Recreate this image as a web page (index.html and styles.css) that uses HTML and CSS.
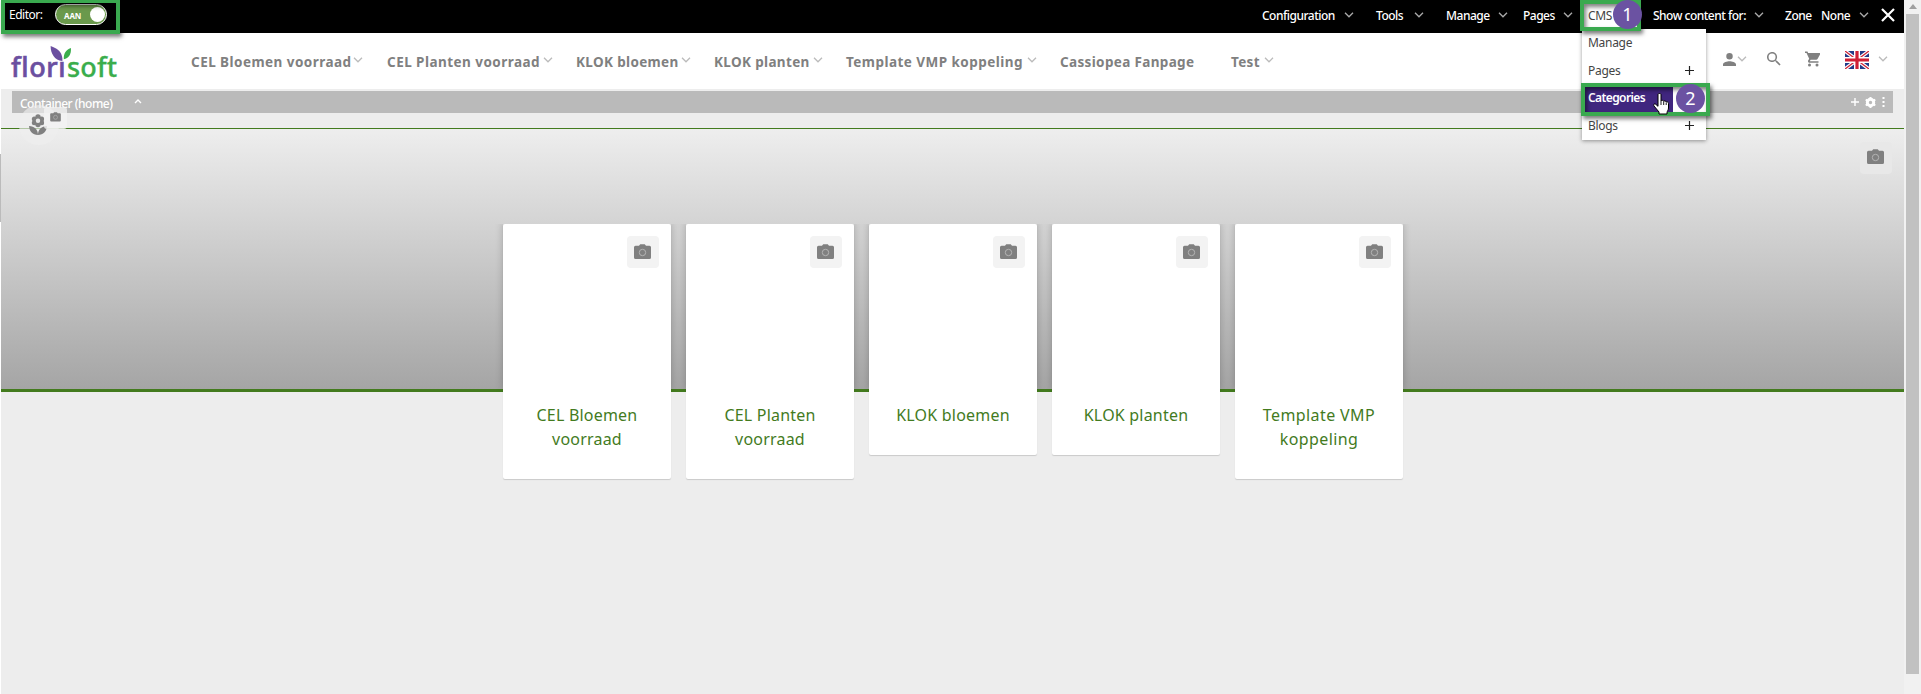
FILE: index.html
```html
<!DOCTYPE html>
<html lang="en">
<head>
<meta charset="utf-8">
<title>Florisoft</title>
<link rel="stylesheet" href="styles.css">
</head>
<body>
<svg class="defs" width="0" height="0">
  <symbol id="chev" viewBox="0 0 10 6"><path d="M1 .8 5 4.8 9 .8" fill="none" stroke="currentColor" stroke-width="1.3"/></symbol>
  <symbol id="cam" viewBox="0 0 17 16"><path d="M5 1.800 6.200.3h4.600L12 1.800h3.500a1.500 1.500 0 0 1 1.500 1.500V13.500a1.500 1.500 0 0 1-1.500 1.500h-14A1.500 1.500 0 0 1 0 13.500V3.300a1.500 1.500 0 0 1 1.500-1.500z" fill="#808080"/><circle cx="8.500" cy="8.500" r="3.200" fill="none" stroke="#b4b4b4" stroke-width="1"/></symbol>
</svg>
<div class="page">
  <header class="admin">
    <div class="editor"><span class="editor-label">Editor:</span><span class="toggle"><span>AAN</span><i></i></span></div>
    <nav class="admin-nav">
      <span class="a a-conf">Configuration</span><svg class="chev"><use href="#chev"/></svg>
      <span class="a a-tools">Tools</span><svg class="chev"><use href="#chev"/></svg>
      <span class="a a-manage">Manage</span><svg class="chev"><use href="#chev"/></svg>
      <span class="a a-pages">Pages</span><svg class="chev"><use href="#chev"/></svg>
      <span class="a a-show">Show content for:</span><svg class="chev"><use href="#chev"/></svg>
      <span class="a a-zone">Zone</span>
      <span class="a a-none">None</span><svg class="chev"><use href="#chev"/></svg>
      <svg class="close" viewBox="0 0 14 14"><path d="M1 1 13 13M13 1 1 13" stroke="#fff" stroke-width="2.200"/></svg>
    </nav>
  </header>
  <div class="site">
    <div class="logo">
      <svg class="leaves" viewBox="0 0 24 18"><path d="M1 0C10 3 14 8 13.500 16 5 15 1 8 1 0z" fill="#6b4fa0"/><path d="M22.500 2C23 9 20 13 15 14 14.500 8 17 4 22.500 2z" fill="#3aad4c"/></svg>
      <span class="flori">florı</span><span class="soft">soft</span>
    </div>
    <nav class="main-nav">
      <span class="m m1">CEL Bloemen voorraad</span><svg class="chev"><use href="#chev"/></svg>
      <span class="m m2">CEL Planten voorraad</span><svg class="chev"><use href="#chev"/></svg>
      <span class="m m3">KLOK bloemen</span><svg class="chev"><use href="#chev"/></svg>
      <span class="m m4">KLOK planten</span><svg class="chev"><use href="#chev"/></svg>
      <span class="m m5">Template VMP koppeling</span><svg class="chev"><use href="#chev"/></svg>
      <span class="m m6">Cassiopea Fanpage</span>
      <span class="m m7">Test</span><svg class="chev"><use href="#chev"/></svg>
    </nav>
    <div class="tools">
      <svg class="user" viewBox="4 4 16 16"><path d="M12 12a4 4 0 1 0 0-8 4 4 0 0 0 0 8zm0 2c-2.700 0-8 1.300-8 4v2h16v-2c0-2.700-5.300-4-8-4z" fill="#808080"/></svg>
      <svg class="chev"><use href="#chev"/></svg>
      <svg class="search" viewBox="3 3 18 18"><path d="M15.500 14h-.8l-.3-.3A6.500 6.500 0 1 0 13.700 14.400l.3.300v.8l5 5 1.500-1.500zM9.500 14a4.500 4.500 0 1 1 0-9 4.500 4.500 0 0 1 0 9z" fill="#808080"/></svg>
      <svg class="cart" viewBox="1 2 20 20"><path d="M7 18a2 2 0 1 0 0 4 2 2 0 0 0 0-4zM1 2v2h2l3.600 7.600-1.400 2.400C4.500 15.400 5.500 17 7 17h12v-2H7.400l1.100-2H16c.7 0 1.400-.4 1.700-1L21.300 5.500C21.600 4.800 21.200 4 20.400 4H5.200L4.300 2zM17 18a2 2 0 1 0 0 4 2 2 0 0 0 0-4z" fill="#808080"/></svg>
      <svg class="flag" viewBox="0 0 24 18"><path d="M0 0h24v18H0z" fill="#223a87"/><path d="M0 0 24 18M24 0 0 18" stroke="#fff" stroke-width="3.600"/><path d="M0 0 24 18M24 0 0 18" stroke="#cf2336" stroke-width="1.300"/><path d="M12 0v18M0 9h24" stroke="#fff" stroke-width="6"/><path d="M12 0v18M0 9h24" stroke="#cf1f35" stroke-width="3.200"/></svg>
      <svg class="chev"><use href="#chev"/></svg>
    </div>
  </div>
  <div class="container-bar">
    <span class="cname">Container (home)</span>
    <svg class="up" viewBox="0 0 8 5"><path d="M1 4 4 1 7 4" fill="none" stroke="#fff" stroke-width="1.400"/></svg>
    <div class="bar-tools">
      <svg width="8" height="8" viewBox="0 0 8 8"><path d="M4 0v8M0 4h8" stroke="#fff" stroke-width="1.400"/></svg>
      <svg width="11" height="11" viewBox="0 0 11 11"><circle cx="5.500" cy="5.500" r="3.200" fill="none" stroke="#fff" stroke-width="3"/><path d="M5.500 0v2.500M5.500 8.500V11M.7 2.700 3 4M8 7l2.300 1.300M.7 8.300 3 7M8 4l2.300-1.300" stroke="#fff" stroke-width="2"/></svg>
      <svg width="3" height="10" viewBox="0 0 3 10"><path d="M.5 0h2v2h-2zM.5 4h2v2h-2zM.5 8h2v2h-2z" fill="#fff"/></svg>
    </div>
  </div>
  <section class="hero">
    <div class="cam hero-cam"><svg><use href="#cam"/></svg></div>
    <div class="cards">
      <article class="card"><div class="pic"><div class="cam"><svg><use href="#cam"/></svg></div></div><h3>CEL Bloemen<br>voorraad</h3></article>
      <article class="card"><div class="pic"><div class="cam"><svg><use href="#cam"/></svg></div></div><h3>CEL Planten<br>voorraad</h3></article>
      <article class="card"><div class="pic"><div class="cam"><svg><use href="#cam"/></svg></div></div><h3>KLOK bloemen</h3></article>
      <article class="card"><div class="pic"><div class="cam"><svg><use href="#cam"/></svg></div></div><h3>KLOK planten</h3></article>
      <article class="card wide"><div class="pic"><div class="cam"><svg><use href="#cam"/></svg></div></div><h3>Template VMP<br>koppeling</h3></article>
    </div>
  </section>
</div>
<aside class="scroll"><svg viewBox="0 0 8 5"><path d="M0 5 4 0 8 5z" fill="#a0a0a0"/></svg><i></i></aside>

<div class="edge"></div>
<div class="flower"><svg viewBox="0 0 18 21"><g fill="#808080"><circle cx="9" cy="3" r="2.700"/><circle cx="9" cy="10.500" r="2.700"/><circle cx="5.300" cy="5" r="2.500"/><circle cx="12.700" cy="5" r="2.500"/><circle cx="5.300" cy="8.700" r="2.500"/><circle cx="12.700" cy="8.700" r="2.500"/><path d="M9 21C3.500 21 .5 17.500 0 12c5.500 0 9 3.500 9 9zM9 21c5.500 0 8.500-3.500 9-9-5.500 0-9 3.500-9 9z"/></g><circle cx="9" cy="6.800" r="2.200" fill="#e8e8e8"/></svg></div>
<div class="mini-cam"><svg><use href="#cam"/></svg></div>

<div class="menu">
  <div class="row"><span class="w-manage">Manage</span></div>
  <div class="row"><span class="w-pages">Pages</span><svg class="plus" viewBox="0 0 9 9"><path d="M4.500 0v9M0 4.500h9" stroke="#222" stroke-width="1.200"/></svg></div>
  <div class="row active"><span class="w-cat">Categories</span></div>
  <div class="row"><span class="w-blogs">Blogs</span><svg class="plus" viewBox="0 0 9 9"><path d="M4.500 0v9M0 4.500h9" stroke="#222" stroke-width="1.200"/></svg></div>
</div>
<div class="cms">CMS</div>
<div class="frame frame-editor"></div>
<div class="frame frame-cms"></div>
<div class="frame frame-cat"></div>
<div class="dot dot1">1</div>
<div class="dot dot2">2</div>
<svg class="hand" viewBox="0 0 17 22"><path d="M5 1.500c0-1.300 3-1.300 3 0V8c.5-1 2.500-.8 2.700.3.600-.7 2.300-.4 2.500.7.800-.5 2.300 0 2.300 1.500V15c0 2-1.500 3-1.500 5v1H6v-2L1 13c-1-1.500.5-3 2-1.500l2 1.800z" fill="#fff" stroke="#000" stroke-width="1"/><path d="M8 8v4M10.700 8.500V12M13.200 9.500V12" stroke="#000" stroke-width=".9"/></svg>
</body>
</html>
```
FILE: styles.css
```css
* { box-sizing: border-box; }
body { margin: 0; width: 1921px; height: 694px; overflow: hidden; display: flex; background: #fff; font-family: "Noto Sans", "Open Sans", sans-serif; position: relative; }
svg { display: block; flex: none; }
span { white-space: nowrap; }
.defs { position: absolute; }
.page { width: 1903px; margin-left: 1px; height: 694px; background: #ededed; }
.chev { width: 10px; height: 6px; margin: 0 1px 0 -1px; }

.admin { height: 33px; background: #000; color: #fff; display: flex; justify-content: space-between; font-size: 12px; letter-spacing: -.5px; }
.editor { display: flex; padding: 4px 0 0 8px; }
.editor-label { width: 46px; line-height: 22px; }
.toggle { width: 52px; height: 21px; border: 1.500px solid #fff; border-radius: 11px; background: #6a994c; display: flex; align-items: center; justify-content: space-between; padding: 2px 1px 0 8px; font: bold 8px/16px "Noto Sans", sans-serif; letter-spacing: -.1px; }
.toggle i { width: 15px; height: 15px; border-radius: 50%; background: #fff; margin-top: -2px; }
.admin-nav { display: flex; align-items: center; height: 30px; width: 642px; color: #fff; }
.admin-nav .chev { color: #aaa; }
.a { font-weight: 500; flex: none; }
.a-conf { width: 83px; } .a-tools { width: 39px; margin-left: 21px; } .a-manage { width: 53px; margin-left: 21px; } .a-pages { width: 41px; margin-left: 14px; } .a-show { width: 102px; margin-left: 79px; } .a-zone { width: 36px; margin-left: 20px; } .a-none { width: 39px; }
.close { width: 14px; height: 14px; margin-left: 11px; }

.site { height: 56px; background: #fff; display: flex; }
.logo { position: relative; width: 190px; padding: 11px 0 0 10px; font: 500 27px/45px "Noto Sans", sans-serif; display: flex; }
.flori { color: #6b4fa0; -webkit-text-stroke: .6px #6b4fa0; width: 56px; letter-spacing: .6px; } .soft { color: #3aad4c; -webkit-text-stroke: .3px #3aad4c; letter-spacing: .2px; }
.leaves { position: absolute; left: 48px; top: 13px; width: 24px; height: 17px; }
.main-nav { display: flex; height: 56px; width: 1100px; font-weight: 700; font-size: 13.500px; line-height: 58px; color: #808080; letter-spacing: .35px; }
.main-nav .chev { margin-top: 24px; color: #bbb; }
.m { flex: none; }
.m1, .m2, .m5 { letter-spacing: .46px; }
.m1 { width: 163px; } .m2 { width: 157px; margin-left: 23px; } .m3 { width: 106px; margin-left: 22px; } .m4 { width: 100px; margin-left: 22px; } .m5 { width: 182px; margin-left: 22px; } .m6 { width: 171px; margin-left: 22px; } .m7 { width: 34px; }
.tools { display: flex; align-items: center; height: 52px; margin-left: 432px; color: #bbb; }
.user { width: 13px; height: 13px; margin-right: 2px; } .search { width: 14px; height: 14px; margin-left: 19px; } .cart { width: 15px; height: 16px; margin-left: 24px; } .flag { width: 24px; height: 18px; margin: 2px 10px 0 25px; }

.container-bar { margin: 2px 11px 0; height: 22px; background: #bababa; color: #fff; display: flex; align-items: center; padding-left: 8px; font-size: 12px; font-weight: 500; }
.container-bar .cname { width: 115px; padding-top: 2px; letter-spacing: -.5px; }
.up { width: 8px; height: 5px; margin: -2px 0 0 -1px; }
.bar-tools { margin-left: auto; display: flex; align-items: center; gap: 6px; padding-right: 8px; }

.hero { margin-top: 15px; height: 264px; border-top: 1px solid #437b1e; border-bottom: 3px solid #437b1e; background: linear-gradient(#eee, #a5a5a5); position: relative; }
.cam { width: 32px; height: 32px; border-radius: 4px; background: #f3f3f3; padding: 8px 7px; }
.cam svg { width: 17px; height: 16px; }
.hero-cam { position: absolute; right: 12px; top: 13px; padding-top: 7px; background: #e8e8e8; }
.cards { display: flex; align-items: flex-start; gap: 15px; padding: 95px 0 0 502px; }
.card { width: 168px; background: #fff; border-radius: 2px; box-shadow: 0 1px 1px rgba(0,0,0,.15); }
.pic { height: 168px; padding: 12px; display: flex; justify-content: flex-end; box-shadow: 0 -2px 8px rgba(0,0,0,.2); clip-path: inset(0 -10px 0 -10px); }
.card h3 { margin: 0; padding: 11px 0 28px; font-weight: 400; font-size: 16px; line-height: 24px; color: #437b1e; text-align: center; letter-spacing: .2px; }
.wide h3 { letter-spacing: .4px; }

.scroll { width: 17px; background: #f1f1f1; display: flex; flex-direction: column; align-items: center; }
.scroll svg { width: 8px; height: 5px; margin-top: 4px; }
.scroll i { width: 13px; height: 660px; background: #c1c1c1; margin-top: 5px; }

.edge { position: absolute; left: 0; top: 154px; width: 1px; height: 68px; background: #bbb; }
.flower { position: absolute; left: 19px; top: 105px; width: 40px; height: 40px; border-radius: 50%; background: rgba(238,238,238,.65); padding: 9px 0 0 10px; }
.flower svg { width: 18px; height: 21px; }
.mini-cam { position: absolute; left: 44px; top: 107px; width: 23px; height: 22px; border-radius: 3px; background: rgba(243,243,243,.8); padding: 5px 6px; }
.mini-cam svg { width: 11px; height: 10px; }

.menu { position: absolute; left: 1582px; top: 29px; width: 124px; height: 111px; background: #fff; box-shadow: 0 1px 4px rgba(0,0,0,.4); font-size: 12px; color: #444; letter-spacing: -.3px; }
.row { height: 27.500px; display: flex; align-items: center; padding-left: 6px; }
.row span { width: 97px; }
.active { width: 91px; background: #40267f; color: #fff; font-weight: 600; letter-spacing: -.6px; }
.plus { width: 9px; height: 9px; }
.cms { position: absolute; left: 1582px; top: 3px; width: 56px; height: 26px; background: #fff; color: #444; font-size: 12px; line-height: 26px; padding-left: 6px; letter-spacing: -.4px; }
.frame { position: absolute; border: 4px solid #3aa94f; box-shadow: 2px 3px 4px rgba(0,0,0,.5), inset 2px 3px 4px rgba(0,0,0,.5); }
.frame-editor { left: 1px; top: -1px; width: 119px; height: 35px; }
.frame-cms { left: 1580px; top: 0; width: 61px; height: 31px; }
.frame-cat { left: 1581px; top: 83px; width: 129px; height: 33px; }
.dot { position: absolute; width: 29px; height: 29px; border-radius: 50%; background: #6b52a2; color: #fff; text-align: center; font-size: 18px; line-height: 29px; }
.dot1 { left: 1613px; top: 0; }
.dot2 { left: 1676px; top: 84px; }
.hand { position: absolute; left: 1653px; top: 93px; width: 17px; height: 22px; }
```
